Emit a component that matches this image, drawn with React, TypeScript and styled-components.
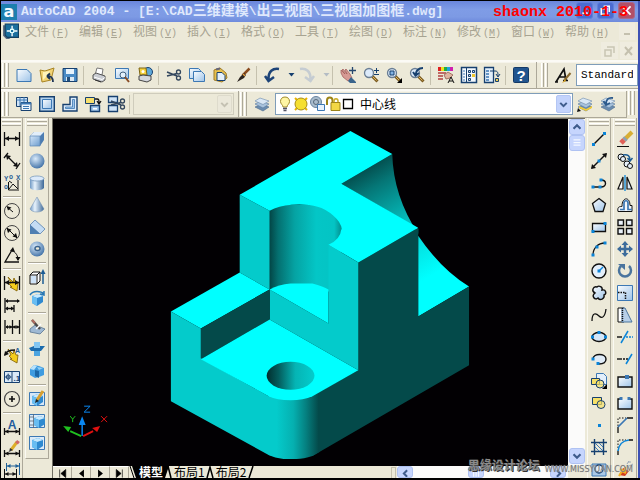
import React from 'react';
import styled, { createGlobalStyle, css } from 'styled-components';

const face = '#ece9d8';
const shade = '#aca899';
const navy = '#17406f';
const mid = '#3c78b4';
const pale = '#cfe3f7';
const sky = '#0a84d8';
const ink = '#101010';
const monoFont = '"Liberation Mono", "Noto Sans CJK SC", monospace';

const GlobalStyle = createGlobalStyle`
  * { box-sizing: border-box; }
  body { margin: 0; background: #000; }
  button, select { font: inherit; color: inherit; margin: 0; }
`;

const Frame = styled.div`
  display: flex;
  flex-direction: column;
  position: relative;
  height: 100vh;
  overflow: hidden;
  padding: 1px 0 2px 1px;
  background: #000;
  font: 12px/16px ${monoFont};
  color: #000;
`;
const Shell = styled.main`
  display: flex;
  flex-direction: column;
  flex: 1;
  min-height: 0;
  background: ${face};
  border-right: 2px solid #3c50b4;
`;

/* Title bar */
const TitleBar = styled.header`
  display: flex;
  align-items: center;
  height: 21px;
  flex: none;
  background: linear-gradient(#6a86dc, #7f9ce6 40%, #7d9ae4 75%, #6e8adc);
`;
const Title = styled.h1`
  flex: 1;
  margin: 0 0 0 4px;
  padding-bottom: 2px;
  font: bold 13px/16px ${monoFont};
  color: #dfe8fc;
  white-space: pre;
`;
const Cjk = styled.span`
  font: bold 14px/16px "Noto Sans CJK SC", sans-serif;
`;
const WindowButtons = styled.div`
  display: flex;
  gap: 4px;
  padding: 0 3px 2px 0;
`;
const WindowButton = styled.button<{ $close?: boolean }>`
  width: 17px;
  height: 17px;
  padding: 0;
  display: grid;
  place-items: center;
  border: 1px solid ${p => (p.$close ? '#a86a8c' : '#5f80dc')};
  border-radius: 3px;
  background: ${p => (p.$close ? '#b25068' : '#4c6cd0')};
`;
const Stamp = styled.p`
  position: absolute;
  right: 12px;
  top: 5px;
  margin: 0;
  font: bold 15px/16px ${monoFont};
  color: #f00;
`;

/* Menu */
const MenuArea = styled.nav`
  height: 38px;
  flex: none;
  background: ${face};
`;
const MenuRow = styled.div<{ $end?: boolean }>`
  display: flex;
  align-items: center;
  height: 19px;
  padding: 0 4px 0 1px;
  ${p => p.$end && css`justify-content: flex-end; gap: 2px; padding-right: 1px;`}
`;
const MenuItems = styled.div`
  display: flex;
  flex: 1;
  margin-left: 6px;
`;
const MenuItem = styled.button`
  width: 54px;
  padding: 0;
  border: 0;
  background: none;
  text-align: left;
  font: 12px/18px "Noto Sans CJK SC", sans-serif;
  white-space: nowrap;
  color: #a7a391;
`;
const Key = styled.span`
  margin-left: 2px;
  font: 10px/16px ${monoFont};
  u { text-underline-offset: 1px; }
`;
const Child = styled.button`
  width: 17px;
  height: 17px;
  padding: 0;
  border: 0;
  background: #efecdf;
`;

/* Toolbars */
const Band = styled.div`
  display: flex;
  flex: none;
  height: 29px;
  border-top: 2px solid #fbfaf5;
`;
const Toolbar = styled.div<{ $grow?: boolean; $fill?: boolean }>`
  display: flex;
  align-items: center;
  flex: ${p => (p.$grow || p.$fill ? '1 1 0' : 'none')};
  min-width: 0;
  overflow: hidden;
  padding-left: ${p => (p.$grow ? 3 : 0)}px;
  padding-right: ${p => (p.$grow ? 0 : 4)}px;
  border-right: ${p => (p.$grow ? 0 : 1)}px solid ${shade};
  border-bottom: 1px solid ${shade};
  box-shadow: inset 0 1px #f6f4ea;
`;
const Grip = styled.span<{ $flat?: boolean }>`
  flex: none;
  width: 7px;
  height: 24px;
  margin: 0 3px 0 1px;
  background: linear-gradient(90deg, #fff 1px, #f2f0e4 1px 2px, ${shade} 2px 3px, transparent 3px 4px, #fff 4px 5px, #f2f0e4 5px 6px, ${shade} 6px);
  ${p => p.$flat && css`
    width: auto;
    height: 7px;
    margin: 1px 1px 2px;
    align-self: stretch;
    background: linear-gradient(#fff 1px, #f2f0e4 1px 2px, ${shade} 2px 3px, transparent 3px 4px, #fff 4px 5px, #f2f0e4 5px 6px, ${shade} 6px);
  `}
`;
const Tool = styled.button<{ $narrow?: boolean }>`
  flex: none;
  display: grid;
  place-items: center;
  width: ${p => (p.$narrow ? 12 : 23)}px;
  height: 22px;
  padding: 0;
  border: 0;
  background: none;
`;
const Divider = styled.span<{ $flat?: boolean }>`
  flex: none;
  width: 1px;
  height: 19px;
  margin: 0 3px 0 2px;
  background: #c5c1ae;
  ${p => p.$flat && css`
    width: 18px;
    height: 2px;
    margin: 2px auto;
    background: linear-gradient(${shade} 50%, #fff 50%);
  `}
`;
const Combo = styled.div<{ $grow?: boolean; $off?: boolean }>`
  display: flex;
  align-items: center;
  flex: ${p => (p.$grow ? '1 1 0' : 'none')};
  min-width: ${p => (p.$grow ? 0 : 101)}px;
  width: ${p => (p.$grow ? 'auto' : '101px')};
  margin-left: ${p => (p.$grow ? 2 : 0)}px;
  height: 22px;
  padding: 1px;
  border: 1px solid ${p => (p.$off ? '#cfccbc' : '#7f9db9')};
  background: ${p => (p.$off ? face : '#fff')};
`;
const Select = styled.select<{ $latin?: boolean }>`
  appearance: none;
  flex: 1;
  min-width: 0;
  height: 18px;
  padding: 0 3px;
  border: 0;
  outline: 0;
  background: none;
  opacity: 1;
  font: ${p => (p.$latin ? '11px' : '12px')}/18px ${p => (p.$latin ? monoFont : '"Noto Sans CJK SC", sans-serif')};
`;
const Arrow = styled.span<{ $off?: boolean }>`
  display: grid;
  place-items: center;
  width: 15px;
  height: 18px;
  border-radius: 2px;
  background: ${p => (p.$off ? '#ebe8da' : '#c3d3fc')};
  border: 1px solid ${p => (p.$off ? '#dedbcc' : '#b4c6f4')};
`;
const Recent = styled.div`
  display: flex;
  flex: none;
  padding-right: 3px;
`;

/* Work area */
const Work = styled.div`
  display: flex;
  flex: 1;
  min-height: 0;
`;
const Dock = styled.div<{ $right?: boolean }>`
  display: flex;
  align-items: flex-start;
  gap: 2px;
  flex: none;
  height: 100%;
  overflow: hidden;
  padding-right: ${p => (p.$right ? 1 : 0)}px;
`;
const Rack = styled.div<{ $short?: boolean; $slim?: boolean }>`
  display: flex;
  flex-direction: column;
  align-items: center;
  flex: none;
  width: ${p => (p.$slim ? 22 : 24)}px;
  min-height: ${p => (p.$short ? 0 : '100%')};
  border-right: 1px solid ${shade};
  border-left: ${p => (p.$slim ? 0 : 1)}px solid #faf9f2;
  ${p => p.$short && css`border-bottom: 1px solid ${shade}; padding-bottom: 4px;`}
`;
const Drawing = styled.section`
  display: flex;
  flex-direction: column;
  flex: 1;
  min-width: 0;
  margin: 0 2px 0 3px;
  border-left: 1px solid #716f64;
  border-top: 1px solid #716f64;
`;
const Upper = styled.div`
  display: flex;
  flex: 1;
  min-height: 0;
`;
const Viewport = styled.div`
  flex: 1;
  min-width: 0;
  background: #020003;
  svg { display: block; width: 100%; height: 100%; }
`;
const ScrollBar = styled.div<{ $row?: boolean }>`
  display: flex;
  flex-direction: ${p => (p.$row ? 'row' : 'column')};
  align-items: center;
  flex: none;
  ${p => (p.$row ? 'width: 171px; height: 12px; padding-right: 2px;' : 'width: 17px; padding-bottom: 2px;')}
  background: #fbfbfa;
`;
const ScrollKey = styled.button<{ $row?: boolean }>`
  display: grid;
  place-items: center;
  flex: none;
  width: 16px;
  height: ${p => (p.$row ? 12 : 16)}px;
  padding: 0;
  overflow: hidden;
  border: 1px solid #afc2f2;
  border-radius: 3px;
  background: #c6d5fd;
`;
const Gap = styled.span<{ $n: number }>`
  flex: ${p => p.$n} 1 0;
`;
const TabRow = styled.div`
  display: flex;
  align-items: stretch;
  flex: none;
  height: 12px;
`;
const StepButton = styled.button`
  display: grid;
  place-items: center;
  flex: none;
  width: 19px;
  height: 12px;
  padding: 0;
  border: 0;
  border-right: 1px solid ${shade};
  border-top: 1px solid #fff;
  background: ${face};
`;
const Tabs = styled.div`
  display: flex;
  flex: 1;
  min-width: 0;
`;
const Tab = styled.button<{ $on?: boolean }>`
  flex: none;
  padding: 0 1px 0 2px;
  height: 12px;
  border: 0;
  font: ${p => (p.$on ? 'bold ' : '')}12px/12px "Noto Sans CJK SC", sans-serif;
  color: ${p => (p.$on ? '#fff' : '#000')};
  background: ${p => (p.$on ? '#000' : face)};
  white-space: nowrap;
`;
const Splitter = styled.span`
  width: 5px;
  margin: 1px 1px 0 0;
  border: 1px solid #c5c1ae;
  border-bottom: 0;
  background: ${face};
`;
const Corner = styled.span`
  width: 17px;
  background: ${face};
`;
const Credit = styled.p`
  position: absolute;
  right: 7px;
  bottom: 5px;
  display: flex;
  align-items: flex-end;
  gap: 5px;
  margin: 0;
  font: bold 12px/20px "Noto Sans CJK SC", sans-serif;
  color: #8b8b8b;
  text-shadow: 1px 1px #333, 0 0 1px #222;
`;
const Site = styled.span`
  font: 8px/10px "DejaVu Sans", sans-serif;
  color: #777;
  text-shadow: 0 0 1px #bbb;
`;

/* Icon drawings on a 16 unit grid */
const Dot = ({ x, y }: { x: number; y: number }) => <rect x={x - 1.5} y={y - 1.5} width="3" height="3" fill={sky} />;
const sheet = <path d="M1 2.500h10l4 4v8H1z" fill="url(#tint)" stroke={mid} />;
const lens = (
  <>
    <path d="M9 9l5.500 5.500" stroke="#7a5a20" strokeWidth="3" />
    <path d="M9.500 9.500l4 4" stroke="#e2b860" />
    <circle cx="6" cy="6" r="4.500" fill="#dceafa" stroke="#6a7e94" strokeWidth="1.300" />
  </>
);
const stack = (
  <>
    <path d="M1 11l7-3 7 3-6 4z" fill="#6b8db0" stroke="#49688c" strokeWidth=".6" />
    <path d="M1 8l6-3 8 3-6 4z" fill="#a8c2dc" stroke="#54759c" strokeWidth=".6" />
    <path d="M1 5l5-3 9 3-6 3.500z" fill="#d9e7f5" stroke="#6a88aa" strokeWidth=".6" />
  </>
);
const printer = (
  <>
    <path d="M4 8l2-7 6 1-1 6z" fill="#fff" stroke="#777" />
    <path d="M2 8l3-2 9 3v4l-3 2-9-3z" fill="#c9ccd2" stroke="#555" />
    <path d="M3 10l8 2.500 3-2" fill="none" stroke="#fff" />
    <path d="M4 13l6 2" stroke="#333" />
  </>
);
const shears = (
  <>
    <path d="M1 5l10 4M1 9l10-2.500" stroke="#33475e" strokeWidth="1.500" />
    <circle cx="12.500" cy="5" r="2" fill="none" stroke="#33475e" strokeWidth="1.300" />
    <circle cx="12.500" cy="11" r="2" fill="none" stroke="#33475e" strokeWidth="1.300" />
  </>
);
const cube = (
  <>
    <path d="M3 5l6-2 5 2v6l-6 4-5-3z" fill="#2f8ad0" />
    <path d="M3 5l6-2 5 2-6 2z" fill="#c7eaff" />
    <path d="M3 5l5 2v8l-5-3z" fill="#68bdf2" />
  </>
);
const hDim = (
  <>
    <path d="M.5 1v14M15.500 1v14M1 7.500h14" stroke={ink} fill="none" strokeWidth="1.300" />
    <path d="M1 7.500l4-2.500v5zM15 7.500l-4-2.500v5z" fill={ink} />
  </>
);
const lowDim = (
  <>
    <path d="M.5 9v7M15.500 9v7M1 12.500h14" stroke={ink} strokeWidth="1.300" />
    <path d="M1 12.500l3.500-2v4zM15 12.500l-3.500-2v4z" fill={ink} />
  </>
);
const bolt = <path d="M4 2l5 5 1-4 2 5h2l-1 8-7-4h2l-3-3 2-1z" fill="#f4cd1c" stroke="#7c5c00" strokeWidth=".8" />;

const icons: Record<string, React.ReactNode> = {
  new: sheet,
  open: <><path d="M1 3l5 1 9-3-3 12-9 2z" fill="#f2d374" stroke="#a88424" /><path d="M4 5l7-1-3 5-4 4z" fill="#fff3b8" /><path d="M14 15c0-5-2-6-6-6m0 0l3-2.500M8 9l3 3" stroke="#1d3455" strokeWidth="1.800" fill="none" /></>,
  save: <><path d="M1 1.500h14v13H1z" fill="#4b8cc6" stroke={navy} /><path d="M4 2h8v5H4z" fill="#e8f3fc" /><path d="M4 10h8v4H4z" fill="#dce8f2" /><path d="M5 10h3v4H5z" fill="#24507c" /></>,
  print: printer,
  preview: <><path d="M1.500 1.500h13v10h-13z" fill="url(#tint)" stroke={mid} /><circle cx="9" cy="8" r="3" fill="#e3f0fc" stroke="#43617e" /><path d="M11 10l4 5" stroke="#8a4c24" strokeWidth="2" /></>,
  publish: <><circle cx="11" cy="5" r="4.500" fill="#5fa8d8" stroke={navy} /><path d="M2 1h7l1 7H3z" fill="#f4d03c" stroke="#7c6414" /><path d="M2 9l4-1 8 1v4l-4 2-8-2z" fill="#d4d7dd" stroke="#444" /><circle cx="6" cy="4.500" r="1.500" fill="#fff" /></>,
  cut: shears,
  copy: <><path d="M.5 1.500h9l2 2v8h-11z" fill="url(#tint)" stroke={mid} /><path d="M4.500 4.500h8l3 3v7h-11z" fill="url(#tint)" stroke={mid} /></>,
  paste: <><path d="M2 3l6-2 6 5 1 5-5 4-8-2z" fill="#e8c04c" stroke="#a07c28" /><path d="M5 5.500h5l3 3v5H5z" fill="#e4f0fb" stroke={navy} /><path d="M4 2.500l4-1" stroke="#667" strokeWidth="2" /></>,
  brush: <><path d="M14.500 1.500l-7 7" stroke="#8a4b1e" strokeWidth="2.500" /><path d="M9 6l2 2-2 3-7 4 3-5z" fill="#2a2420" /><path d="M8 7l2 2" stroke="#e8a040" strokeWidth="1.500" /></>,
  undo: <path d="M15 2C9 1 4 4 4.500 13M1 9l3.500 5L10 10" fill="none" stroke="#1d4478" strokeWidth="2.500" />,
  redo: <path d="M1 2c6-1 11 2 10.500 11M15 9l-3.500 5L6 10" fill="none" stroke="#c5ccd2" strokeWidth="2.500" />,
  drop: <path d="M5.500 6h6l-3 3.500z" fill="#17406f" />,
  dropOff: <path d="M5.500 6h6l-3 3.500z" fill="#b4bcc4" />,
  pan: <><path d="M1 6l2 4 5 4 4-3-2-4-4-5-1 1 2 4-4-5-1 1 3 4-4-4z" fill="#d69a94" stroke="#9c5856" strokeWidth=".7" /><path d="M8 14l3-4 5 5v1h-6z" fill="#3a648c" /><path d="M12.500 0v7M9 3.500h7" stroke="#27486e" strokeWidth="1.300" /></>,
  zoomRt: <>{lens}<path d="M13.500 1v5M11 3.500h5M11 7.500h5" stroke={navy} /></>,
  zoomWin: <>{lens}<path d="M4 4h4v4H4z" fill="#84b4e4" stroke={navy} /><path d="M16 11v5h-5z" fill="#000" /></>,
  zoomPrev: <>{lens}<path d="M14 1C9 1 7 3 6.500 8M4 5l2.500 3.500L10 6" fill="none" stroke={navy} strokeWidth="2" /></>,
  props: <><path d="M0 0h3v4H0z" fill="#e02020" /><path d="M3 0h3v4H3z" fill="#f0e020" /><path d="M6 0h3v4H6z" fill="#20b040" /><path d="M9 0h3v4H9z" fill="#20a0e0" /><path d="M12 0h3v4h-3z" fill="#d020b0" /><path d="M0 6h8M0 9h5M0 12h5" stroke="#b04040" strokeWidth="1.500" /><path d="M6 8l4-3 5 3-3 3-4 1z" fill="#e0b4a0" stroke="#906050" strokeWidth=".8" /><path d="M10 16l3-6 3 6M11 14h4" stroke={ink} fill="none" /></>,
  center: <><path d="M.5.5h15v15H.5z" fill="#f4f9fe" stroke={navy} strokeWidth="1.500" /><path d="M5.500 0v16" stroke={navy} /><path d="M2 4h2M2 7h2M2 10h2M2 13h2" stroke={mid} /><path d="M7.500 3.500h2v2h-2zM11.500 3.500h2v2h-2zM7.500 7.500h2v2h-2zM7.500 11.500h2v2h-2z" fill={pale} stroke={navy} /><path d="M11 7h3v3h-3z" fill="#f0c830" /></>,
  palettes: <><path d="M.5.500h9v15h-9z" fill="#e3effb" stroke={navy} strokeWidth="1.300" /><path d="M2 4h3M2 7h3M2 10h3M2 13h3" stroke={mid} strokeWidth="1.500" /><path d="M6 4h5c3 0 3 2 3 5m-2-2l2 3 2-3" stroke={navy} fill="none" /><path d="M11.500 11.500h3v3h-3z" fill="#f0d050" stroke={navy} /></>,
  help: <><rect x=".5" y=".5" width="15" height="15" rx="1" fill="#21548e" stroke="#143a66" /><text x="8" y="13.500" textAnchor="middle" fontFamily="Liberation Sans" fontWeight="bold" fontSize="15" fill="#fff">?</text></>,
  style: <><path d="M1 15L9 2l2 11M4 10h7M0 15h3M8 13.500h5" stroke={ink} strokeWidth="1.700" fill="none" /><path d="M15.500 6l-6 7" stroke="#8a6a30" strokeWidth="2" /><path d="M10 12l-3 4 4-2z" fill="#d4a020" /></>,
  vports: <><path d="M.5 1.500h11v9H.5z" fill={pale} stroke={navy} /><path d="M.5 4h11M4 1v9M8 1v9" stroke={mid} /><path d="M5 6.500h10v8H5z" fill="#eff6fd" stroke={navy} /><path d="M5 7.500h10" stroke={mid} strokeWidth="2" /><path d="M7 10.500h6M7 12.500h6" stroke={mid} /></>,
  viewport: <><path d="M.7.700h14.600v14.600H.7z" fill="#b4d2ee" stroke={navy} strokeWidth="1.400" /><path d="M3.500 3.500h9v9h-9z" fill="url(#tint)" stroke={mid} /></>,
  polyView: <><path d="M8 1h7v14H1V8.500h7z" fill="#dcebfa" stroke={navy} strokeWidth="1.400" /><path d="M10.500 3.500h2v9h-9V11h7z" fill="#9fc5ea" stroke={mid} strokeWidth=".8" /></>,
  objView: <><path d="M.5 1.500h9v6h-9z" fill="#f7df6c" stroke={navy} /><path d="M10 3h2c2 0 2 1 2 4m-2-2l2 3 2-3" stroke={ink} fill="none" strokeWidth="1.300" /><path d="M5.500 9.500h9v6h-9z" fill="#9fc5ea" stroke={navy} strokeWidth="1.400" /><path d="M8 12h4v1.500H8z" fill="#fff" /></>,
  clipView: <><path d="M.5.500h9v6h-9zM.5 9.500h9v6h-9z" fill={pale} stroke={navy} strokeWidth="1.300" /><g transform="translate(2 0)">{shears}</g></>,
  layers: stack,
  layerCur: <><g>{stack}</g><path d="M2 10l7 3 6-3v2l-6 3-7-3z" fill="#f2cc38" /><path d="M0 16l4-1-3-3z" fill={ink} /></>,
  layerPrev: <>{stack}<path d="M13 2c-5-1-7 2-7 6M3.500 5L6 9l4-2" stroke="#2c5a8c" strokeWidth="1.800" fill="none" /></>,
  bulb: <><path d="M8 1c-3 0-4.500 2-4.500 4.500S6 9 6 11h4c0-2 2.500-3 2.500-5.500S11 1 8 1z" fill="#fff6a4" stroke="#a08a2c" /><path d="M6 12.500h4M6.500 14.500h3" stroke="#556" strokeWidth="1.500" /></>,
  sun: <><path d="M2 2l2 2M14 2l-2 2M2 14l2-2M14 14l-2-2" stroke="#e8b400" strokeWidth="2" /><circle cx="8" cy="8" r="6" fill="#f6df30" stroke="#a88c18" /></>,
  sunVp: <><circle cx="7" cy="6" r="5.500" fill="#a9bccd" stroke="#6884a0" /><circle cx="7" cy="6" r="2.500" fill="none" stroke="#567" /><path d="M8.500 8.500h7v6h-7z" fill="#e8f2fc" stroke={mid} /></>,
  lock: <><path d="M2 9V4.500c0-4 5.500-4 5.500 0V6" fill="none" stroke="#9c8418" strokeWidth="2" /><path d="M9 7V5c0-3 4-3 4 0v2" fill="none" stroke="#c8ac28" strokeWidth="1.500" /><path d="M6 6.500h9v8H6z" fill="#f2d744" stroke="#9c8418" /></>,
  swatch: <path d="M2.500 3.500h9v9h-9z" fill="#fff" stroke="#000" strokeWidth="1.300" />,
  down: <path d="M4 6l4 4 4-4" fill="none" stroke="#3f5c8c" strokeWidth="2.500" />,
  downOff: <path d="M4 6l4 4 4-4" fill="none" stroke="#c4c1b2" strokeWidth="2.500" />,
  up: <path d="M4 10l4-4 4 4" fill="none" stroke="#3f5c8c" strokeWidth="2.500" />,
  left: <path d="M10 4L6 8l4 4" fill="none" stroke="#3f5c8c" strokeWidth="2.500" />,
  right: <path d="M6 4l4 4-4 4" fill="none" stroke="#3f5c8c" strokeWidth="2.500" />,
  ribs: <path d="M4 4.500h8M4 7.500h8M4 10.500h8" stroke="#f4f8ff" strokeWidth="1.500" />,
  ribsV: <path d="M4.500 4v8M7.500 4v8M10.500 4v8" stroke="#f4f8ff" strokeWidth="1.500" />,
  first: <path d="M4.500 3v10M12 3v10L6 8z" fill="#000" stroke="#000" strokeWidth=".8" />,
  prev: <path d="M11 3v10L5 8z" />,
  next: <path d="M5 3v10l6-5z" />,
  last: <path d="M11.500 3v10M4 3v10l6-5z" stroke="#000" strokeWidth=".8" />,
  min: <path d="M5 10.500h6" stroke="#fff" strokeWidth="2" />,
  max: <path d="M6 3.500h6v6M3.500 6h6v6h-6z" fill="none" stroke="#fff" strokeWidth="1.600" />,
  close: <path d="M3 3l10 10M13 3L3 13" stroke="#fff" strokeWidth="2.200" />,
  minOff: <path d="M5 10h6" stroke="#c4c0ae" strokeWidth="2" />,
  maxOff: <path d="M6 4h7v6M4 7h6v6H4z" fill="none" stroke="#c9c5b4" strokeWidth="1.500" />,
  closeOff: <path d="M5 4l7 8M12 4l-7 8" stroke="#c4c0ae" strokeWidth="2" />,
  acad: <><path d="M0 0h16v16H0z" fill="#1c7fae" /><text x="8" y="13" textAnchor="middle" fontFamily="DejaVu Sans" fontWeight="bold" fontSize="16" fill="#f4fbff">a</text></>,
  doc: <><path d="M1 2h4v11l3 2H4l-3-3z" fill="#556880" /><path d="M3 1h12.500v12.500H5l-2-2z" fill="#1b6f9e" stroke="#123f60" /><path d="M9.500 2.500v10M4.500 7.500h10" stroke="#fff" strokeWidth="1.300" /><path d="M8 6h3v3H8z" fill="#1b6f9e" stroke="#dff" /></>,

  dimLinear: hDim,
  dimAligned: <><path d="M4 0L0 5M16 10l-4 6M3 3l10 10" stroke={ink} strokeWidth="1.300" /><path d="M2 2l5 1-4 4zM14 14l-5-1 4-4z" fill={ink} /></>,
  dimOrd: <><path d="M4.500 7v8H15M5 14l4-5 5 5V5M8 8l-3-2" stroke={ink} fill="none" /><g fontFamily="Liberation Sans" fontSize="6.500" fontWeight="bold" fill="#285c94"><text x="0" y="6">Y</text><text x="12" y="5">X</text><text x="0" y="14">o</text><text x="5" y="4">o</text></g></>,
  dimRad: <><circle cx="8" cy="8" r="7.500" fill="none" stroke="#444" /><path d="M9 9L3 4" stroke={ink} /><path d="M2.500 3l5 1.500-3.500 3z" fill={ink} /></>,
  dimDia: <><circle cx="8" cy="8" r="7.500" fill="none" stroke="#444" /><path d="M3 3l10 10" stroke={ink} /><path d="M2.500 3l5 1.500L4 8zM13.500 13l-5-1.500L12 8z" fill={ink} /></>,
  dimAng: <><path d="M8 3L1 15h14" fill="none" stroke={ink} strokeWidth="1.300" /><path d="M8 4c4 1 6 5 6 9" fill="none" stroke={ink} /><path d="M9 0l2 5-5-1zM14 14l-2.500-4h5z" fill={ink} /></>,
  dimQuick: <>{bolt}{hDim}</>,
  dimBase: <><path d="M1 1v15M10 8v7M2 4h13M2 11.500h8" stroke={ink} strokeWidth="1.300" /><path d="M1 4l3-2v4zM16 4l-3-2v4zM1 11.500l3-2v4zM10 11.500l-3-2v4z" fill={ink} /></>,
  dimCont: <><path d="M1 1v14M8.500 1v14M15.500 1v14M2 8h13" stroke={ink} strokeWidth="1.300" /><path d="M1.500 8l2.500-2v4zM8 8L5.500 6v4zM9 8l2.500-2v4zM15 8l-2.500-2v4z" fill={ink} /></>,
  leader: <>{bolt}<path d="M1 8C2 4 6 3 11 3" fill="none" stroke={ink} strokeWidth="1.300" /><path d="M0 9l1-5 4 3z" fill={ink} /><text x="11" y="6" fontFamily="Liberation Sans" fontWeight="bold" fontSize="7" fill="#285c94">A</text></>,
  tol: <><path d="M.5 2.500h15v11H.5zM8 2v12" fill="#d9e9f8" stroke={navy} /><circle cx="4.200" cy="8" r="2" fill="none" stroke={navy} /><path d="M4.200 4.500v7M1 8h6.500" stroke={navy} strokeWidth=".8" /><text x="9.500" y="11.500" fontFamily="Liberation Sans" fontWeight="bold" fontSize="8" fill={navy}>.1</text></>,
  centerMark: <><circle cx="8" cy="8" r="7.500" fill="none" stroke="#444" strokeWidth="1.200" /><path d="M8 5v6M5 8h6" stroke={ink} strokeWidth="1.600" /></>,
  dimEdit: <>{lowDim}<text x="8" y="9.500" textAnchor="middle" fontFamily="Liberation Sans" fontWeight="bold" fontSize="12" fill="#1f5c9c">A</text></>,
  dimTedit: <>{lowDim}<path d="M13 1L7 9" stroke="#dcae28" strokeWidth="3" /><path d="M14.500 0l-2 2.500" stroke="#d06868" strokeWidth="3.500" /><path d="M5 11l1-4 3 2z" fill="#333" /></>,
  dimUpdate: <><path d="M2.500 0v8M15.500 0v12M3 3h12" stroke="#1f6098" /><path d="M3 3l3.500-2v4zM15 3l-3.500-2v4z" fill="#1f6098" /><path d="M.5 6v10M12.500 6v10M1 11h11" stroke={ink} /><path d="M1 11l3.500-2v4zM12 11L8.500 9v4z" fill={ink} /></>,

  box: <><path d="M1 5l4-4h10v8l-4 6H1z" fill="#4d7db2" /><path d="M1 5l4-4h10l-4 4z" fill="#e2eefa" /><path d="M1 5h10v10H1z" fill="url(#tint2)" stroke="#5c86b4" strokeWidth=".7" /></>,
  sphere: <circle cx="8" cy="8" r="7.500" fill="url(#ball)" />,
  cyl: <><path d="M1 3v10c2 3 12 3 14 0V3z" fill="url(#tube)" /><ellipse cx="8" cy="3.500" rx="7" ry="2.500" fill="#dceafa" stroke="#6c90b8" strokeWidth=".7" /></>,
  cone: <path d="M8 0l7 12c-2 4-12 4-14 0z" fill="url(#tube)" stroke="#6c8cb0" strokeWidth=".5" />,
  wedge: <><path d="M1 6l5-5 10 9-5 5H1z" fill="#45709e" /><path d="M1 6l5-5 10 9-5 5z" fill="#c4dcf4" stroke="#5c84b0" strokeWidth=".7" /><path d="M1 6l10 9H1z" fill="#4f7fb2" /></>,
  torus: <><circle cx="8" cy="8" r="7.500" fill="url(#ball)" /><ellipse cx="8.500" cy="7.500" rx="2.500" ry="2" fill={face} stroke="#3a638e" strokeWidth="1.500" /></>,
  extrude: <><path d="M1 6l3-3h7v9l-3 3H1z" fill="#fff" stroke={ink} /><path d="M1 6h7v9M8 6l3-3" fill="none" stroke={ink} /><path d="M2 7h5v7H2z" fill={pale} /><path d="M14 15V4" stroke="#1c5c94" strokeWidth="1.500" /><path d="M14 0l2.500 5h-5z" fill="#1c5c94" /></>,
  revolve: <>{cube}<path d="M1 4c3-5 11-4 14-1m-4 0l4 1V0" stroke="#2878b4" strokeWidth="1.500" fill="none" /></>,
  slice: <><path d="M1 10l5-4 10 4-5 5-10-2z" fill="#9fb9d3" stroke="#4a6888" strokeWidth=".7" /><path d="M3 1l8 9" stroke="#4e4a48" strokeWidth="2.500" /><path d="M12 5l-5 5" stroke="#fff" strokeWidth="1.500" /><path d="M3 1l3 3" stroke="#b26c60" strokeWidth="2" /></>,
  section: <><path d="M5 1h6v14H5z" fill="#4ba4e0" /><path d="M0 7l5-2h11l-4 5H2z" fill="#1b6cae" /><path d="M5 1h6v6H5z" fill="#82c6f2" /></>,
  interfere: <><path d="M1 6l4-4 5 1 5 2v7l-5 2-4 1-5-3z" fill="#3f9ce0" /><path d="M1 6l4-4 3 1-3 4z" fill="#b8e2fc" /><path d="M6 7l4 1v7l-4-2z" fill="#1b68a8" /><path d="M8 4l6 1-4 2z" fill="#93d0f6" /></>,
  setDraw: <><path d="M.5 1.500h15v13H.5z" fill="#d7e8f8" stroke={mid} />{cube}<path d="M14 0L8 9" stroke="#d8a030" strokeWidth="3" /><path d="M6 12l1-4 3 2z" fill="#222" /></>,
  setView: <><path d="M.5 1.500h15v13H.5z" fill="#dcebf8" stroke={mid} /><path d="M0 4h5M0 8h5M0 12h5M4.500 1v14" stroke="#567" strokeWidth=".8" /><g transform="translate(2 0)">{cube}</g></>,
  setProf: <><path d="M.5 1.500h15v13H.5z" fill="#dcebf8" stroke={mid} />{cube}</>,

  line: <><path d="M2 14L14 2" stroke={ink} strokeWidth="1.500" /><Dot x={2.5} y={13.5} /><Dot x={13.5} y={2.5} /></>,
  xline: <><path d="M1 15L15 1" stroke={ink} strokeWidth="1.500" /><path d="M0 16l1-5 4 4zM16 0l-1 5-4-4z" fill={ink} /><Dot x={8} y={8} /></>,
  pline: <><path d="M1 12h9c6 0 6-7 0-7" fill="none" stroke={ink} strokeWidth="1.400" /><Dot x={2} y={12} /><Dot x={9} y={12} /><Dot x={10} y={5} /></>,
  polygon: <path d="M8 1.500l6.500 5-2.500 8H4l-2.500-8z" fill="url(#tint)" stroke={ink} strokeWidth="1.300" />,
  rect: <><path d="M1.500 4.500h13v8h-13z" fill="url(#tint)" stroke={ink} strokeWidth="1.300" /><Dot x={2} y={12.5} /><Dot x={14} y={4.5} /></>,
  arc: <><path d="M2 14C2 7 7 2 14 2" fill="none" stroke={ink} strokeWidth="1.300" /><Dot x={2} y={14} /><Dot x={6} y={6} /><Dot x={14} y={2} /></>,
  circle: <><circle cx="8" cy="8" r="7" fill="#e4effa" stroke={ink} strokeWidth="1.400" /><path d="M8 8l4-4" stroke={sky} strokeWidth="1.500" /><Dot x={8} y={8} /></>,
  cloud: <path d="M4 8C0 6 2 1 6 2c2-2 6 0 5 3 4-1 5 4 2 5 1 4-4 6-6 3-3 3-7-2-3-5z" fill="url(#tint)" stroke={ink} strokeWidth="1.400" />,
  spline: <path d="M1 14C1 5 5 6 8 9s6 1 7-7" fill="none" stroke={ink} strokeWidth="1.300" />,
  ellipse: <><ellipse cx="8" cy="8" rx="7" ry="4.500" fill="#d5e6f7" stroke={ink} strokeWidth="1.400" /><Dot x={1.500} y={8} /><Dot x={14.500} y={8} /><Dot x={8} y={3.500} /></>,
  ellArc: <><path d="M2 8c0-6 13-6 13 0 0 4-3 5-7 5" fill="#dfebf7" stroke={ink} strokeWidth="1.400" /><Dot x={2} y={8} /><Dot x={7} y={12.500} /></>,
  insert: <><path d="M5.500.500h7l3 3v8h-10z" fill="#e3effb" stroke={mid} /><path d="M.5 5.500h8v6h-8z" fill="#f6e068" stroke={navy} /><circle cx="9" cy="11" r="4" fill="#f6e068" fillOpacity=".7" stroke={navy} /><path d="M16 11v5h-5z" /></>,
  block: <><path d="M1.500 2.500h9v7h-9z" fill="#f6e068" stroke={navy} /><circle cx="10" cy="9.500" r="4" fill="#f6e068" fillOpacity=".7" stroke={navy} /></>,
  point: <Dot x={8.5} y={8.5} />,
  hatch: <><path d="M3.500 0v16M12.500 0v16M0 3.500h16M0 12.500h16" stroke={navy} strokeWidth="1.400" /><path d="M4 8l4 4M4 4l8 8M8 4l4 4" stroke={mid} /></>,
  region: <><path d="M1 3h14v12H1z" fill="#a9c8e6" stroke={mid} /><circle cx="8" cy="8" r="4" fill="#e8f1fa" stroke={navy} strokeWidth="1.300" /></>,

  erase: <><path d="M0 15.500h12" stroke={ink} /><path d="M15 1l-8 8" stroke="#d8ae34" strokeWidth="4" /><path d="M9 7l-2 2" stroke="#8fa0b2" strokeWidth="5" /><path d="M7 9l-3 3" stroke="#e06058" strokeWidth="5" /></>,
  copyObj: <><circle cx="4" cy="4" r="3" fill="#e7f0fa" stroke={ink} /><circle cx="6" cy="6" r="2.500" fill="#e7f0fa" stroke={ink} /><circle cx="10" cy="11" r="3" fill="#e7f0fa" stroke={ink} /><circle cx="13" cy="13" r="2.500" fill="#e7f0fa" stroke={ink} /><path d="M6 2c5-1 7 1 7 5m-2.500-2l2.500 3 2.500-3" stroke="#1c5c94" strokeWidth="1.500" fill="none" /></>,
  mirror: <><path d="M6 2v12H1z" fill="#fff" stroke={ink} strokeWidth="1.200" /><path d="M10 2v12h5z" fill="#dce8f4" stroke={ink} strokeWidth="1.200" /><path d="M8 0v16" stroke={sky} strokeWidth="1.300" /></>,
  offset: <><path d="M1 14.500c-1-5 2-5 4-5 0-10 8-10 8-1h2v6z" fill="#f2f6fb" stroke={ink} /><path d="M3 12.500h4V6c0-3 4-3 4 0v6.500h4" fill="none" stroke={mid} strokeWidth="1.700" /></>,
  array: <path d="M1 1h5.500v5.500H1zM9.500 1H15v5.500H9.500zM1 9.500h5.500V15H1zM9.500 9.500H15V15H9.500z" fill="#eaf2fb" stroke={ink} strokeWidth="1.400" />,
  move: <><path d="M8 2v12M2 8h12" stroke="#3c6c9c" strokeWidth="2.500" /><path d="M8 0l3.500 4h-7zM8 16l3.500-4h-7zM0 8l4-3.500v7zM16 8l-4-3.500v7z" fill="#3c6c9c" /></>,
  rotate: <><path d="M12 3a6 6 0 1 1-8 0" fill="none" stroke="#4a749e" strokeWidth="2.500" /><path d="M1 1h7v6z" fill="#4a749e" /></>,
  scale: <><path d="M.5.500h15v15H.5z" fill="url(#tint)" stroke={mid} /><path d="M1 7.500h7.500V15" stroke={ink} strokeDasharray="1.500 1" fill="none" strokeWidth="1.500" /></>,
  stretch: <><path d="M1 1h6v14H1z" fill="#fff" stroke={ink} /><path d="M8 1l7 14H5V1z" fill="#b7cfe8" stroke="#4a749e" /><path d="M5.500 1v14" stroke={ink} strokeDasharray="1 1" strokeWidth="1.500" /></>,
  trim: <><path d="M0 8h5" stroke={ink} strokeWidth="1.400" /><path d="M9 8h7" stroke={sky} strokeDasharray="2 1" strokeWidth="1.400" /><path d="M4 14L11 2" stroke={sky} strokeWidth="1.500" /></>,
  extend: <><path d="M0 8h5" stroke={ink} strokeWidth="1.400" /><path d="M6 8h6" stroke={ink} strokeDasharray="2 1" strokeWidth="1.400" /><path d="M9 13l6-10" stroke={sky} strokeWidth="1.500" /></>,
  breakPt: <><path d="M1 4h14v10H1z" fill="url(#tint)" stroke={ink} strokeWidth="1.400" /><path d="M8 2h4v4H8z" fill={mid} /></>,
  breakAt: <><path d="M4 4H1v10h14V4h-3" fill="url(#tint)" stroke={ink} strokeWidth="1.400" /><path d="M2.500 2h3v3h-3zM10.500 2h3v3h-3z" fill={mid} /></>,
  chamfer: <><path d="M1 16v-6M10 1h6" stroke={ink} strokeWidth="1.300" /><path d="M1 9V1h8" stroke={ink} strokeDasharray="1.500 1.500" fill="none" /><path d="M1 10l9-9" stroke={mid} strokeWidth="1.700" /></>,
  fillet: <><path d="M1 16v-4M12 1h4" stroke={ink} strokeWidth="1.300" /><path d="M1 9V1h8" stroke={ink} strokeDasharray="1.500 1.500" fill="none" /><path d="M1 12C2 5 5 2 12 1" stroke={sky} strokeWidth="1.700" fill="none" /></>,
  explode: <><path d="M2 14l4-7 6 3-4 5z" fill="#d03c20" /><path d="M3 8l4 2M8 6v5M2 15l3-5 4 2" stroke="#f2b020" strokeWidth="2" fill="none" /><path d="M10 3l2-3M12 5l4-2M11 1h3" stroke="#9aa8b8" /></>,
};

const Svg = styled.svg`
  display: block;
  flex: none;
  overflow: visible;
`;
const Icon = ({ name, size = 16 }: { name: string; size?: number }) => (
  <Svg width={size} height={size} viewBox="0 0 16 16" aria-hidden="true">{icons[name]}</Svg>
);

const ToolSet = ({ names, flat }: { names: string; flat?: boolean }) => (
  <>
    {names.split(' ').map((n, i) =>
      n === '|' ? <Divider key={i} $flat={flat} /> : (
        <Tool key={i} aria-label={n} $narrow={n.startsWith('drop')}><Icon name={n} /></Tool>
      ),
    )}
  </>
);

const Model = () => (
  <svg viewBox="53 119 514 348" role="img" aria-label="3D model">
    <defs>
      <linearGradient id="tint" x2="1" y2="1"><stop stopColor="#fbfdff" /><stop offset="1" stopColor="#9dc3e8" /></linearGradient>
      <linearGradient id="tint2" x2="1" y2="1"><stop stopColor="#d4e6f8" /><stop offset="1" stopColor="#6c9cce" /></linearGradient>
      <linearGradient id="tube"><stop stopColor="#6f98c4" /><stop offset=".35" stopColor="#e8f3fd" /><stop offset="1" stopColor="#3d6897" /></linearGradient>
      <radialGradient id="ball" cx=".4" cy=".35" r=".7"><stop stopColor="#d9eafa" /><stop offset="1" stopColor="#3d6ea4" /></radialGradient>
      <linearGradient id="bore" gradientUnits="userSpaceOnUse" x1="269" x2="341"><stop stopColor="#034646" /><stop offset=".12" stopColor="#047070" /><stop offset=".35" stopColor="#05a3a3" /><stop offset=".65" stopColor="#04c6c6" /><stop offset=".9" stopColor="#04c4c4" /><stop offset="1" stopColor="#049090" /></linearGradient>
      <linearGradient id="hole"><stop stopColor="#022e2e" /><stop offset=".25" stopColor="#045c5c" /><stop offset=".6" stopColor="#05b4b4" /><stop offset="1" stopColor="#04cccc" /></linearGradient>
      <linearGradient id="round" gradientUnits="userSpaceOnUse" x1="276" x2="318"><stop stopColor="#04cbcb" /><stop offset=".4" stopColor="#05b0b0" /><stop offset=".7" stopColor="#058080" /><stop offset="1" stopColor="#044a4a" /></linearGradient>
      <linearGradient id="cove" gradientUnits="userSpaceOnUse" x1="362" y1="165" x2="397" y2="226"><stop stopColor="#034646" /><stop offset=".35" stopColor="#057676" /><stop offset="1" stopColor="#05bcbc" /></linearGradient>
      <linearGradient id="cove2" gradientUnits="userSpaceOnUse" x1="418" y1="238" x2="438" y2="272"><stop stopColor="#04dcdc" /><stop offset="1" stopColor="#00ffff" /></linearGradient>
    </defs>
    <path d="M341 184L392 154Q393 196 418 234V229z" fill="url(#cove)" />
    <path d="M418 236Q441 270 469 287L418 317z" fill="url(#cove2)" />
    <path d="M358 263L418 228V317L469 287V366L312 457L300 440V403L358 371z" fill="#044a4a" />
    <path d="M269 205H341V292H269z" fill="url(#bore)" />
    <path d="M239 195L269 211V290L239 273z" fill="#04cbcb" />
    <path d="M350 131L392 154L341 184L418 228L358 263L328 245Q340 240 341 229Q341 223 333 216Q325 209 317 207Q307 204 291 205Q278 206 269 211L239 195z" fill="#00ffff" />
    <path d="M269 290L328 324V245L358 263V371L269 320z" fill="#04cbcb" />
    <path d="M269 290Q278 285 290 284H312Q323 287 328 290V324z" fill="#00ffff" />
    <path d="M239 273L269 290L200 329L170 312z" fill="#00ffff" />
    <path d="M200 329L269 290V320L200 360z" fill="#044a4a" />
    <path d="M170 312L200 329V359L268 397L286 400V460L268 456L170 402z" fill="#04cbcb" />
    <path d="M268 396L290 398L319 392V453L312 457Q303 460 296 460H283Q274 459 268 456z" fill="url(#round)" />
    <path d="M269 320L358 371L312 397Q303 401 290 401Q276 401 268 397L200 360z" fill="#00ffff" />
    <ellipse cx="290" cy="376.500" rx="24" ry="14" fill="url(#hole)" />
    <path d="M81 437V425" stroke="#0a86f0" strokeWidth="1.500" />
    <path d="M81 417l3.500 9h-7z" fill="#0a86f0" />
    <path d="M82 437l10-5" stroke="#e01010" strokeWidth="1.800" />
    <path d="M99 427l-3 6-5-4z" fill="#e01010" />
    <path d="M80 437l-11-5" stroke="#20c020" strokeWidth="1.800" />
    <path d="M62 427l8 1-3 5z" fill="#20c020" />
    <path d="M83 407h6l-6 6h6" fill="none" stroke="#0a86f0" />
    <path d="M100 417l6 6M106 417l-6 6" stroke="#e01010" />
    <path d="M69 417l2.500 3 2.500-3M71.500 420v3" fill="none" stroke="#20c020" />
  </svg>
);

const menus = ['文件F', '编辑E', '视图V', '插入I', '格式O', '工具T', '绘图D', '标注N', '修改M', '窗口W', '帮助H'];

/* Slanted tab edges */
const edges = {
  open: <><path d="M3 0h5v12H7z" /><path d="M1 0l4 12" stroke="#000" /></>,
  close: <><path d="M0 0h5L1 12H0z" /><path d="M4 0l3 12" stroke="#000" strokeWidth="1.500" /></>,
  between: <path d="M1 12L4 1l3 11" fill="none" stroke="#000" strokeWidth="1.500" />,
  end: <path d="M2 12L6 0" stroke="#000" strokeWidth="1.500" />,
};
const Edge = ({ kind }: { kind: keyof typeof edges }) => (
  <Svg width="8" height="12" viewBox="0 0 8 12" aria-hidden="true">{edges[kind]}</Svg>
);

export default function App() {
  return (
    <Frame>
      <GlobalStyle />
      <Shell>
        <TitleBar>
          <Icon name="acad" />
          <Title>
            AutoCAD 2004 - [E:\CAD<Cjk>三维建模</Cjk>\<Cjk>出三视图</Cjk>\<Cjk>三视图加图框</Cjk>.dwg]
          </Title>
          <WindowButtons>
            <WindowButton aria-label="Minimize"><Icon name="min" size={14} /></WindowButton>
            <WindowButton aria-label="Restore"><Icon name="max" size={15} /></WindowButton>
            <WindowButton aria-label="Close" $close><Icon name="close" size={13} /></WindowButton>
          </WindowButtons>
        </TitleBar>
        <MenuArea>
          <MenuRow>
            <Icon name="doc" size={17} />
            <MenuItems>
              {menus.map(m => (
                <MenuItem key={m}>{m.slice(0, 2)}<Key>(<u>{m[2]}</u>)</Key></MenuItem>
              ))}
            </MenuItems>
            <Child aria-label="Minimize drawing"><Icon name="minOff" /></Child>
          </MenuRow>
          <MenuRow $end>
            <Child aria-label="Restore drawing"><Icon name="maxOff" /></Child>
            <Child aria-label="Close drawing"><Icon name="closeOff" /></Child>
          </MenuRow>
        </MenuArea>
        <Band>
          <Toolbar>
            <Grip />
            <ToolSet names="new open save | print preview publish | cut copy paste brush | undo drop redo dropOff | pan zoomRt zoomWin zoomPrev | props center palettes | help" />
          </Toolbar>
          <Toolbar $grow>
            <Grip />
            <ToolSet names="style" />
            <Combo $grow>
              <Select $latin aria-label="Text style"><option>Standard</option></Select>
            </Combo>
          </Toolbar>
        </Band>
        <Band>
          <Toolbar>
            <Grip />
            <ToolSet names="vports viewport polyView objView clipView |" />
            <Combo $off>
              <Select aria-label="Viewport scale" disabled />
              <Arrow $off><Icon name="downOff" size={13} /></Arrow>
            </Combo>
          </Toolbar>
          <Toolbar $fill>
            <Grip />
            <ToolSet names="layers" />
            <Combo $grow>
              <Icon name="bulb" /><Icon name="sun" /><Icon name="sunVp" /><Icon name="lock" /><Icon name="swatch" />
              <Select aria-label="Layer"><option>中心线</option></Select>
              <Arrow><Icon name="down" size={13} /></Arrow>
            </Combo>
            <Recent><ToolSet names="layerCur layerPrev" /></Recent>
          </Toolbar>
          <Grip />
        </Band>
        <Work>
          <Dock>
            <Rack $slim>
              <Grip $flat />
              <ToolSet flat names="dimLinear dimAligned dimOrd | dimRad dimDia dimAng | dimQuick dimBase dimCont | leader tol centerMark | dimEdit dimTedit dimUpdate" />
            </Rack>
            <Rack $short>
              <Grip $flat />
              <ToolSet flat names="box sphere cyl cone wedge torus | extrude revolve | slice section interfere | setDraw setView setProf" />
            </Rack>
          </Dock>
          <Drawing>
            <Upper>
              <Viewport><Model /></Viewport>
              <ScrollBar>
                <ScrollKey aria-label="Scroll up"><Icon name="up" size={14} /></ScrollKey>
                <ScrollKey aria-label="Vertical position"><Icon name="ribs" size={14} /></ScrollKey>
                <Gap $n={1} />
                <ScrollKey aria-label="Scroll down"><Icon name="down" size={14} /></ScrollKey>
              </ScrollBar>
            </Upper>
            <TabRow>
              {['first', 'prev', 'next', 'last'].map(n => (
                <StepButton key={n} aria-label={n + ' tab'}><Icon name={n} size={13} /></StepButton>
              ))}
              <Tabs role="tablist">
                <Edge kind="open" />
                <Tab role="tab" aria-selected $on>模型</Tab>
                <Edge kind="close" />
                <Tab role="tab">布局1</Tab>
                <Edge kind="between" />
                <Tab role="tab">布局2</Tab>
                <Edge kind="end" />
              </Tabs>
              <Splitter />
              <ScrollBar $row>
                <ScrollKey $row aria-label="Scroll left"><Icon name="left" size={13} /></ScrollKey>
                <Gap $n={5} />
                <ScrollKey $row aria-label="Horizontal position"><Icon name="ribsV" size={13} /></ScrollKey>
                <Gap $n={6} />
                <ScrollKey $row aria-label="Scroll right"><Icon name="right" size={13} /></ScrollKey>
              </ScrollBar>
              <Corner />
            </TabRow>
          </Drawing>
          <Dock $right>
            <Rack>
              <Grip $flat />
              <ToolSet flat names="line xline pline polygon rect arc circle cloud spline ellipse ellArc insert block point hatch region" />
            </Rack>
            <Rack>
              <Grip $flat />
              <ToolSet flat names="erase copyObj mirror offset array move rotate scale stretch trim extend breakPt breakAt chamfer fillet explode" />
            </Rack>
          </Dock>
        </Work>
      </Shell>
      <Stamp>shaonx 2010-1-3</Stamp>
      <Credit>思缘设计论坛<Site>WWW.MISSYUAN.COM</Site></Credit>
    </Frame>
  );
}
